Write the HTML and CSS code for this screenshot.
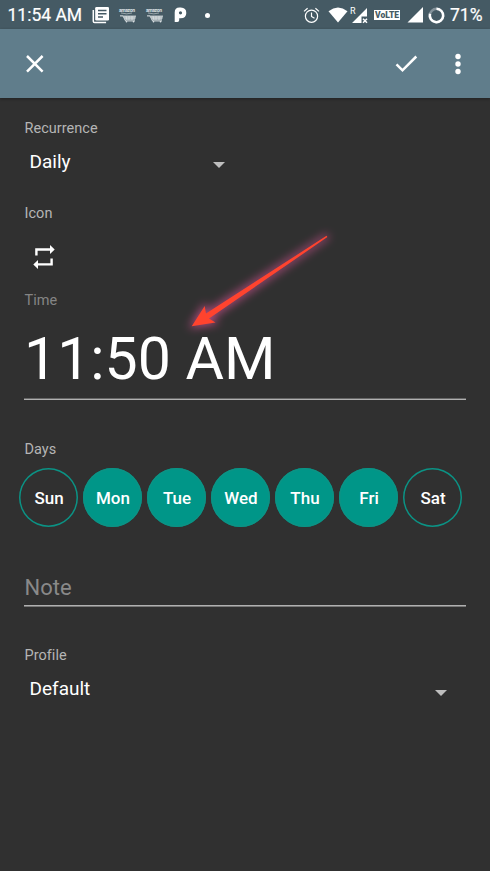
FILE: index.html
```html
<!DOCTYPE html>
<html lang="en">
<head>
<meta charset="utf-8">
<title>Edit reminder</title>
<link rel="stylesheet" href="styles.css">
</head>
<body>
<div class="status">
  <span class="clock">11:54 AM</span>
  <svg class="doc" width="18" height="18" viewBox="0 0 18 18"><path fill="#fff" d="M4.500 1h11.200q1.300 0 1.300 1.300v10.900q0 1.300-1.300 1.300H4.500q-1.300 0-1.300-1.300V2.300q0-1.300 1.300-1.300z"/><path d="M1.300 4v11.200q0 1.300 1.300 1.300h11.500" fill="none" stroke="#fff" stroke-width="1.500"/><path d="M6 4.500h8.500M6 7.700h8.500M6 10.900h5" stroke="#455a64" stroke-width="1.500"/></svg>
  <svg class="cart" width="18" height="17" viewBox="0 0 18 17"><g id="cart"><text x="0" y="5" class="brand" textLength="16">amazon</text><path d="M2 6q6 1.700 11 0" stroke="#bcc5c9" fill="none" stroke-width=".7"/><path d="M1 8.900h3l2.500 5H16" fill="none" stroke="#e3e8ea" stroke-width="1"/><path d="M4 9h13l-1.200 4H6z" fill="#a9b4b9"/><path d="M4 9h13M5 11h11.500M7 9l1 4M10 9v4M13 9v4" stroke="#e3e8ea" stroke-width=".7"/><circle cx="7.500" cy="14.800" r=".8" fill="#e3e8ea"/><circle cx="14.500" cy="14.800" r=".8" fill="#e3e8ea"/></g></svg>
  <svg class="cart second" width="18" height="17" viewBox="0 0 18 17"><use href="#cart"/></svg>
  <svg class="pandora" width="13" height="16" viewBox="0 0 13 16"><path fill="#fff" fill-rule="evenodd" d="M5.500.5h1.300Q12.300.7 12.300 5.900q0 5.300-5.800 5.400H5.200v2q0 1.700-1.800 1.700H.7V5.500Q.7.500 5.500.5zM6.500 4.200a1.600 1.600 0 1 0 0 3.200 1.600 1.600 0 1 0 0-3.200z"/></svg>
  <span class="dot"></span>
  <div class="system">
    <svg class="alarm" width="17" height="17" viewBox="0 0 17 17" fill="none" stroke="#fff" stroke-width="1.200"><circle cx="8.500" cy="9.200" r="6.100"/><path d="M1 4.400 4.600 1.300M16 4.400l-3.600-3.100M8.500 5.500v4l3 1.800"/></svg>
    <svg class="wifi" width="20" height="16" viewBox="0 0 20 16"><path fill="#fff" d="M.5 4.200Q10-3.200 19.500 4.200L10 15.500z"/></svg>
    <svg class="roam" width="19" height="19" viewBox="0 0 19 19"><text x="0" y="8" class="r">R</text><path fill="#fff" d="M17 2v8.500h-5.500V17H2z"/><path d="m13 12.800 4 4m0-4-4 4" stroke="#fff" stroke-width="1.500"/></svg>
    <span class="volte">VoLTE</span>
    <svg class="signal" width="17" height="16" viewBox="0 0 17 16"><path fill="#fff" d="M16 0v15.500H.5z"/></svg>
    <svg class="ring" width="17" height="17" viewBox="0 0 17 17" fill="none" stroke-width="2.500"><circle cx="8.500" cy="8.500" r="6.700" stroke="#84929a"/><path stroke="#fff" d="M8.500 1.800a6.700 6.700 0 1 1-6.500 5"/></svg>
    <span class="battery">71%</span>
  </div>
</div>
<header class="appbar">
  <svg class="close" width="18" height="18" viewBox="0 0 18 18"><path d="m1 1 15.600 15.600m0-15.600L1 16.600" stroke="#fff" stroke-width="2.500"/></svg>
  <svg class="check" width="23" height="18" viewBox="0 0 23 18"><path d="m1.500 9.300 6 6L21.300 1.500" fill="none" stroke="#fff" stroke-width="2.500"/></svg>
  <svg class="more" width="6" height="22" viewBox="0 0 6 22" fill="#fff"><circle cx="3" cy="3.500" r="2.700"/><circle cx="3" cy="11" r="2.700"/><circle cx="3" cy="18.500" r="2.700"/></svg>
</header>
<main>
  <section class="recurrence">
    <div class="label">Recurrence</div>
    <div class="select short"><span>Daily</span><i class="caret"></i></div>
  </section>
  <section class="icon">
    <div class="label">Icon</div>
    <svg class="repeat" width="22" height="24" viewBox="0 0 22 24"><path d="M3.400 10.500V4.500H17M18.600 13.500v5.900H5" fill="none" stroke="#fff" stroke-width="2.400"/><path d="M17 0v9l4.700-4.500zM5 15v9L.3 19.400z" fill="#fff"/></svg>
  </section>
  <section class="time">
    <div class="label dim">Time</div>
    <div class="value">11:50 AM</div>
    <svg class="arrow" width="180" height="120" viewBox="0 0 180 120"><g class="glow"><path id="pointer" d="M21.700 106.300 34.700 86l1.300 7.500L156.500 15.800l.9 1.300L39 98.500l6.500 4z"/></g><use href="#pointer" fill="#ff432e"/></svg>
  </section>
  <section class="days">
    <div class="label">Days</div>
    <div class="week"><span>Sun</span><span class="on">Mon</span><span class="on">Tue</span><span class="on">Wed</span><span class="on">Thu</span><span class="on">Fri</span><span>Sat</span></div>
  </section>
  <div class="note">Note</div>
  <section class="profile">
    <div class="label">Profile</div>
    <div class="select"><span>Default</span><i class="caret"></i></div>
  </section>
</main>
</body>
</html>
```
FILE: styles.css
```css
* { box-sizing: border-box; }
body { margin: 0; width: 490px; height: 871px; overflow: hidden; background: #303030; color: #fff; font-family: Roboto, sans-serif; }
svg { display: block; flex: none; overflow: visible; }
.status { height: 29px; background: #455a64; display: flex; align-items: center; padding: 1px 7px 0 7.5px; }
.clock { width: 84px; font-size: 17.5px; line-height: 28px; white-space: nowrap; -webkit-text-stroke: .2px #fff; }
.cart { margin-left: 9px; }
.brand { font: bold 5px Roboto, sans-serif; fill: #dce2e4; }
.pandora { margin-left: 10px; }
.dot { width: 5px; height: 5px; border-radius: 50%; background: #fff; margin-left: 18px; }
.system { display: flex; align-items: center; margin-left: auto; }
.wifi { margin-left: 8px; }
.roam { margin-left: 2px; }
.r { font: 9px Roboto, sans-serif; fill: #fff; }
.volte { width: 26px; height: 10px; margin-left: 5px; background: #fff; color: #455a64; font-size: 8.5px; line-height: 10px; font-weight: 900; text-align: center; }
.signal { margin-left: 7px; }
.ring { margin-left: 4px; }
.battery { width: 33px; margin-left: 5px; font-size: 17.5px; white-space: nowrap; -webkit-text-stroke: .2px #fff; }
.appbar { height: 69px; background: #607d8b; display: flex; align-items: center; padding: 0 29px 0 26px; box-shadow: 0 1px 3px rgba(0, 0, 0, .3); }
.check { margin-left: auto; }
.more { margin-left: 37px; }
main { padding: 21px 24px 0; }
.label { height: 20px; padding-left: .5px; font-size: 14.5px; line-height: 20px; letter-spacing: .03px; color: #b5b5b5; }
.dim { color: #858585; }
.recurrence { height: 85px; }
.select { display: flex; align-items: center; height: 26px; margin-top: 9px; padding: 0 18px 0 5.5px; font-size: 19px; }
.short { width: 219px; }
.caret { margin: 7px 0 0 auto; border: 6.5px solid transparent; border-top-color: #bebebe; border-bottom: 0; }
.icon { height: 87px; }
.repeat { margin: 21px 0 0 9px; }
.time { position: relative; height: 149px; }
.value { height: 89px; padding-top: 13px; border-bottom: 1px solid #b0b0b0; box-shadow: inset 0 -1px #666; font-size: 59px; line-height: 70px; }
.arrow { position: absolute; left: 146px; top: -71px; }
.glow { fill: #e858a0; stroke: #e858a0; stroke-width: 3; filter: blur(5px); opacity: .7; }
.days { height: 131px; }
.week { display: flex; gap: 5px; margin: 8px 0 0 -5px; }
.week span { flex: none; width: 59px; height: 59px; box-shadow: inset 0 0 0 1.5px #0b9385; border-radius: 50%; display: flex; align-items: center; justify-content: center; padding: 1px 0 0 1px; font-size: 17px; font-weight: 500; }
.week .on { background: #009688; }
.note { height: 35px; border-bottom: 1px solid #b0b0b0; box-shadow: 0 1px #777; padding-left: .5px; font-size: 22px; line-height: 33px; color: #898989; }
.profile { padding-top: 40px; }
.profile .select { padding-right: 19px; }
.profile .caret { margin-top: 9px; }
```
